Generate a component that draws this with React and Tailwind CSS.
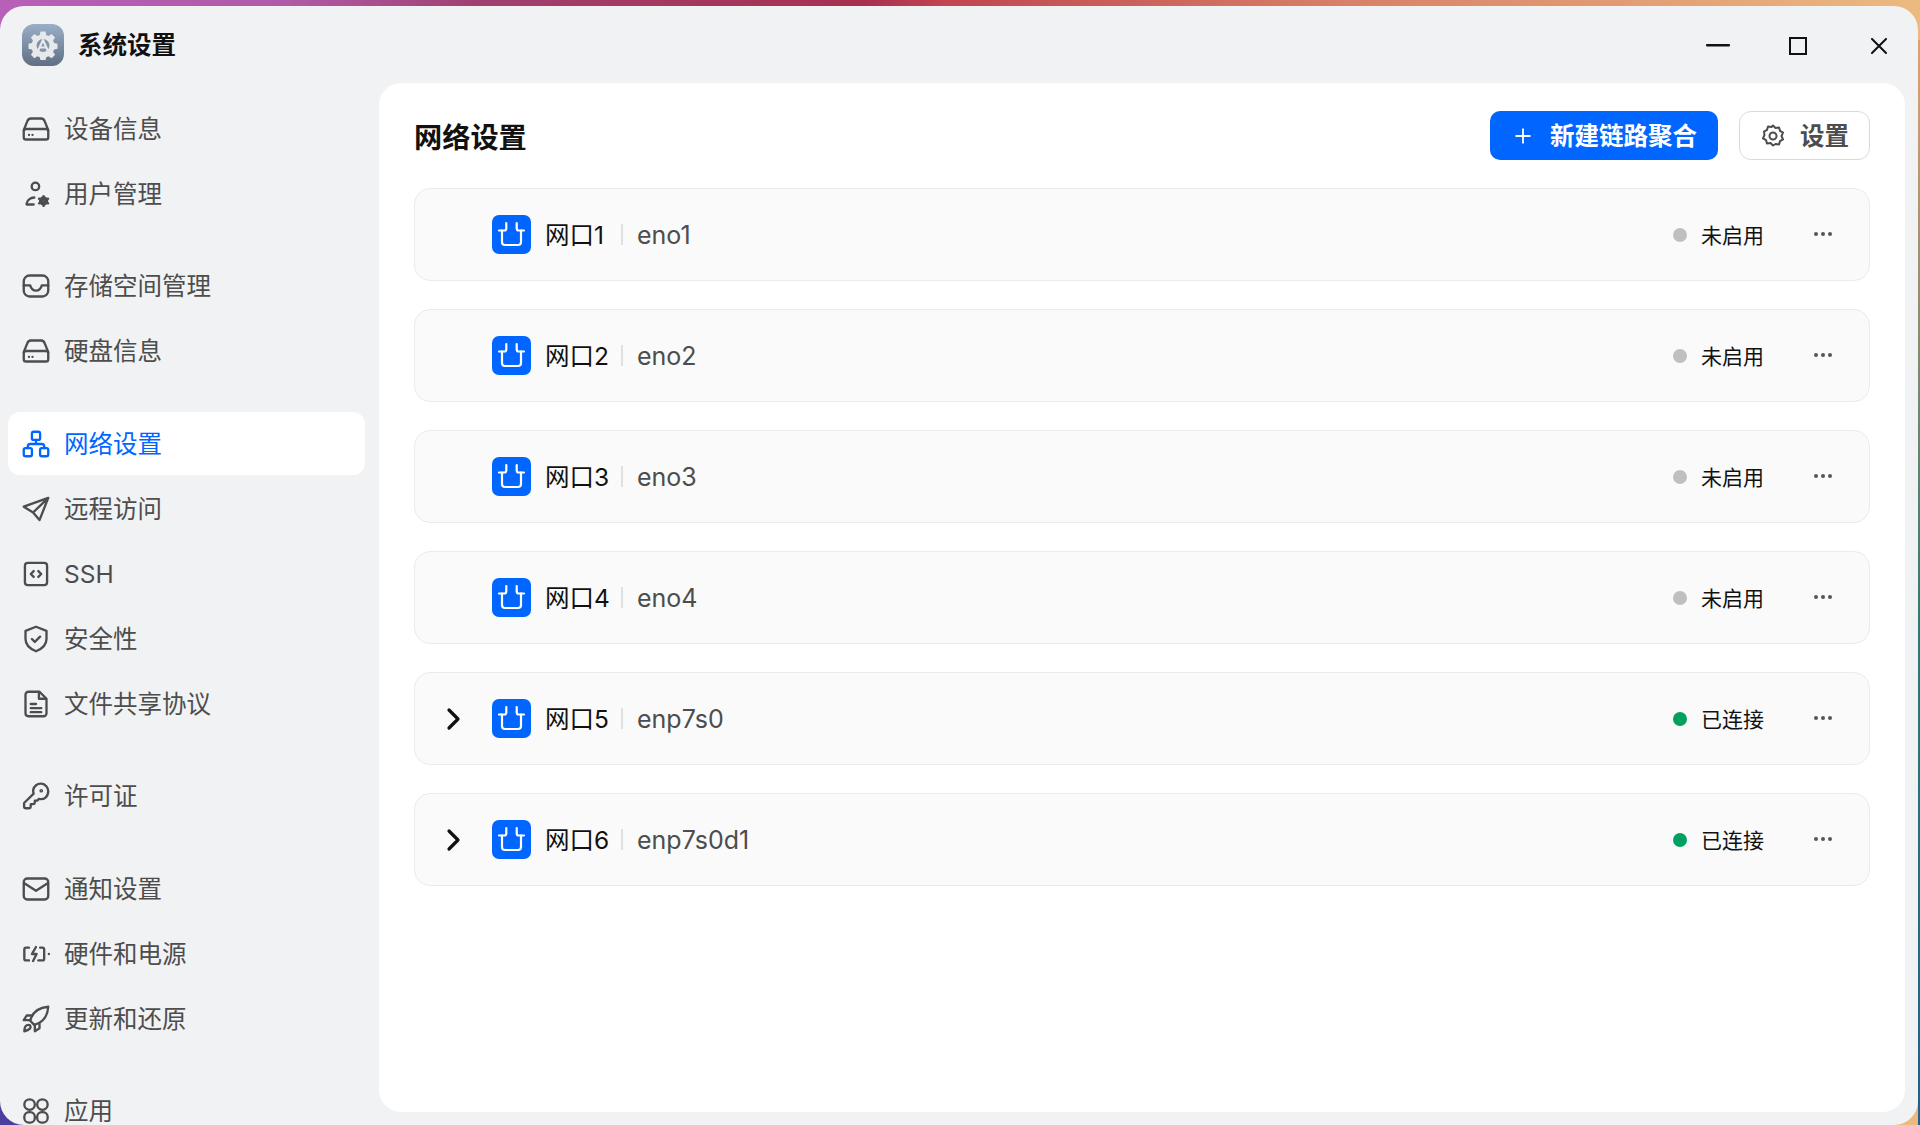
import React from "react";

const cjk = "font-['Inter','Noto_Sans_CJK_SC',sans-serif]";

const Ic = ({ children, className = "", size = 28, vb = 24, sw = 2 }) => (
  <svg width={size} height={size} viewBox={`0 0 ${vb} ${vb}`} fill="none" stroke="currentColor" strokeWidth={sw} strokeLinecap="round" strokeLinejoin="round" className={className}>
    {children}
  </svg>
);

const icons = {
  disk: (
    <>
      <path d="M1.5 13 L4.500 5.500 A3.500 3.500 0 0 1 7.700 3 H16.300 A3.500 3.500 0 0 1 19.500 5.500 L22.500 13" />
      <rect x="1.5" y="12" width="21" height="9" rx="2" />
      <path d="M6 17h.01M9 17h.01" />
    </>
  ),
  user: (
    <>
      <circle cx="11.500" cy="5.500" r="3.200" />
      <path d="M4 20 C4.500 17 7.500 15.200 10.500 15" />
      <path d="M4 21 H10" />
      <circle cx="18.500" cy="18" r="1.300" />
      <circle cx="18.500" cy="18" r="3" />
      <path d="M18.500 13.800v1.200M18.500 21v1.200M14.600 16l1.200.6M21.200 19.400l1.200.6M14.600 20l1.200-.6M21.200 16.600l1.200-.6" />
    </>
  ),
  inbox: (
    <>
      <rect x="1.5" y="3" width="21" height="18" rx="5" />
      <path d="M1.5 11.5 H7 C8 15 10 16 12 16 C14 16 16 15 17 11.5 H22.5" />
    </>
  ),
  net: (
    <>
      <rect x="8.5" y="1.5" width="7" height="7" rx="1.5" />
      <rect x="1.5" y="15.5" width="7" height="7" rx="1.5" />
      <rect x="15.5" y="15.5" width="7" height="7" rx="1.5" />
      <path d="M12 8.5V12M5 15.5V14a2 2 0 0 1 2-2h10a2 2 0 0 1 2 2v1.5" />
    </>
  ),
  send: <path d="M22.5 1.5 L1.5 9 L9.5 14 L15 20.5 Z M22.5 1.5 L9.5 14" transform="translate(0 1)" />,
  ssh: (
    <>
      <rect x="2.5" y="2.5" width="19" height="19" rx="2.5" />
      <path d="M10 9.5 L7.5 12 L10 14.5M14 9.5 L16.5 12 L14 14.5" />
    </>
  ),
  shield: (
    <>
      <path d="M12 1.5 L21 5 V12 C21 17 17 20.5 12 22.5 C7 20.5 3 17 3 12 V5 Z" />
      <path d="M8.5 12 L11 14.5 L15.5 10" />
    </>
  ),
  file: (
    <>
      <path d="M5.5 1.5 H15 L21 7.5 V20 A2.5 2.5 0 0 1 18.5 22.5 H5.5 A2.5 2.5 0 0 1 3 20 V4 A2.5 2.5 0 0 1 5.5 1.5 Z" />
      <path d="M14.5 2 V7.5 H20.5M7.5 12H12M7.5 15.5H16.5M7.5 19H16.5" />
    </>
  ),
  key: (
    <>
      <path d="M22.5 8 A6.5 6.5 0 0 0 9.6 6.8 C9.4 8.5 10 10 10 10 L1.8 18 V21 A1.5 1.5 0 0 0 3.3 22.5 H5.8 C7 22.5 7.5 21.5 7.5 20.5 V19 H9.5 C10.5 19 11 18 11 17 V16 H13 L14.5 14.5 C19 15.5 22.5 12.5 22.5 8 Z" />
      <circle cx="16.5" cy="7.5" r=".6" />
    </>
  ),
  mail: (
    <>
      <rect x="1.5" y="3" width="21" height="18" rx="3" />
      <path d="M2 7 L12 13.5 L22 7" />
    </>
  ),
  power: (
    <>
      <path d="M6 6.5H3.5A1.5 1.5 0 0 0 2 8v8a1.5 1.5 0 0 0 1.5 1.5H6" />
      <path d="M15.5 6.5H17.5A1.5 1.5 0 0 1 19 8v8a1.5 1.5 0 0 1-1.5 1.5H14" />
      <path d="M12 6 L8.5 12 H12.5 L9.5 18" />
      <path d="M23 12h.01" />
    </>
  ),
  rocket: (
    <>
      <path d="M22.5 1.5 C15 2 9 6 7 13.5 L10.5 17 C18 15 22 9 22.5 1.5 Z" />
      <path d="M8 9 H4 L1.5 13 H7M15 16 V20 L11 22.5 V17" />
      <path d="M2 22.5 C2 19 3 17 5.5 17 C7.5 17 8 19 6.5 20.5 C5.5 21.5 4 22 2 22.5 Z" />
    </>
  ),
  apps: (
    <>
      <circle cx="6.5" cy="6.5" r="4.5" />
      <circle cx="17.5" cy="6.5" r="4.5" />
      <rect x="2" y="13" width="9" height="9" rx="4" />
      <rect x="13" y="13" width="9" height="9" rx="4" />
    </>
  ),
};

const Item = ({ icon, label, active, last }) => (
  <div className={`h-[63px] mx-[8px] w-[357px] rounded-[12px] flex items-center pl-[14px] ${last ? "mb-[29.5px]" : "mb-[2px]"} ${active ? "bg-white text-[#0066ff]" : "text-[#4d4d4d]"}`}>
    <Ic size={28} sw={2}>{icons[icon]}</Ic>
    <span className="ml-[14px] text-[24.5px] leading-[24px]">{label}</span>
  </div>
);

const Port = () => (
  <div className="w-[39px] h-[39px] rounded-[7px] bg-[#0066ff] shrink-0">
    <svg width="39" height="39" viewBox="0 0 39 39" fill="none" stroke="#fff" strokeWidth="2.2" strokeLinecap="round" strokeLinejoin="round">
      <path d="M7 15.500 H12.500 Q14 15.500 14.300 13.500 V8" />
      <path d="M32 15.500 H26.500 Q25 15.500 24.700 13.500 V8" />
      <path d="M10 15.500 V27 A3 3 0 0 0 13 30 H26 A3 3 0 0 0 29 27 V15.500" />
    </svg>
  </div>
);

const rows = [
  ["网口1", "eno1", false],
  ["网口2", "eno2", false],
  ["网口3", "eno3", false],
  ["网口4", "eno4", false],
  ["网口5", "enp7s0", true],
  ["网口6", "enp7s0d1", true],
];

const Row = ({ name, dev, on }) => (
  <div className="h-[93px] rounded-[16px] border border-[#ebebeb] bg-[#fafafa] flex items-center pr-[37px]">
    <div className="w-[77px] flex justify-end pr-[29px] shrink-0">
      {on && (
        <svg width="22" height="26" viewBox="0 0 22 26" fill="none" stroke="#111" strokeWidth="3.2" strokeLinecap="round" strokeLinejoin="round" className="mr-[-2px]">
          <path d="M6 4 L15 13 L6 22" />
        </svg>
      )}
    </div>
    <Port />
    <span className="ml-[14px] mt-[2px] text-[24.5px] leading-none text-[#111] w-[62px] whitespace-nowrap">{name}</span>
    <span className="ml-[14px] w-[2px] h-[21px] bg-[#e0e0e0]" />
    <span className="ml-[14px] mt-[2px] text-[25px] leading-none text-[#4d4d4d]">{dev}</span>
    <span className={`ml-auto w-[14px] h-[14px] rounded-full ${on ? "bg-[#00a060]" : "bg-[#bfbfbf]"}`} />
    <span className="ml-[14px] mt-[2px] text-[21px] leading-none text-[#111]">{on ? "已连接" : "未启用"}</span>
    <span className="ml-[50px] mb-[2px] flex gap-[3px]">
      <i className="w-[4px] h-[4px] rounded-full bg-[#555]" />
      <i className="w-[4px] h-[4px] rounded-full bg-[#555]" />
      <i className="w-[4px] h-[4px] rounded-full bg-[#555]" />
    </span>
  </div>
);

export default function App() {
  return (
    <div className={`w-[1920px] h-[1125px] overflow-hidden pt-[6px] bg-[linear-gradient(90deg,#b85fb8_0%,#b05aa8_15%,#a04070_25%,#a83050_45%,#c04550_49%,#d88068_70%,#ecba80_100%)] relative ${cjk}`}>
      <div className="absolute right-0 top-[40px] bottom-0 w-[2px] bg-[linear-gradient(180deg,#e0a070,#2a7a70_55%,#1f5f90)]" />
      <div className="absolute left-0 bottom-0 w-[40px] h-[40px] bg-[#4a3fa0]" />
      <div className="relative w-[1918px] h-[1119px] rounded-[24px] bg-[#f1f2f4] overflow-hidden flex flex-col">
        <div className="h-[77px] flex items-center shrink-0 pl-[22px] pr-[31px]">
          <div className="w-[42px] h-[42px] rounded-[12px] bg-[linear-gradient(180deg,#9aaec6,#5f6f84)] flex items-center justify-center">
            <svg width="30" height="30" viewBox="0 0 30 30">
              <path fill="#e6e8ec" d="M12.5 1.5h5l.7 3.6 2.4 1 3-2 3.5 3.5-2 3 1 2.4 3.4.7v5l-3.4.7-1 2.4 2 3-3.5 3.5-3-2-2.4 1-.7 3.1h-5l-.7-3.1-2.4-1-3 2-3.5-3.500 2-3-1-2.400-3.400-.700v-5l3.400-.700 1-2.400-2-3 3.500-3.500 3 2 2.400-1z" />
              <circle cx="15" cy="15.500" r="6.500" fill="#8494a8" />
              <path fill="none" stroke="#e6e8ec" strokeWidth="2.200" strokeLinecap="round" d="M15 10 L10.500 20 M15 10 L19.500 20 M12 17.500 H18" />
            </svg>
          </div>
          <span className="ml-[14px] mt-[2px] text-[24.5px] font-bold text-[#111] leading-none">系统设置</span>
          <div className="ml-auto mt-[2px] flex items-center text-[#111]">
            <svg width="24" height="3" className="mr-[59px]"><rect width="24" height="2.500" fill="currentColor" rx="1" /></svg>
            <svg width="18" height="18" className="mr-[64px]"><rect x="1" y="1" width="16" height="16" fill="none" stroke="currentColor" strokeWidth="2" /></svg>
            <svg width="16" height="16"><path d="M1 1 L15 15 M15 1 L1 15" stroke="currentColor" strokeWidth="2" strokeLinecap="round" /></svg>
          </div>
        </div>
        <div className="flex flex-1 min-h-0">
          <div className="w-[379px] shrink-0 pt-[14px]">
            <Item icon="disk" label="设备信息" />
            <Item icon="user" label="用户管理" last />
            <Item icon="inbox" label="存储空间管理" />
            <Item icon="disk" label="硬盘信息" last />
            <Item icon="net" label="网络设置" active />
            <Item icon="send" label="远程访问" />
            <Item icon="ssh" label="SSH" />
            <Item icon="shield" label="安全性" />
            <Item icon="file" label="文件共享协议" last />
            <Item icon="key" label="许可证" last />
            <Item icon="mail" label="通知设置" />
            <Item icon="power" label="硬件和电源" />
            <Item icon="rocket" label="更新和还原" last />
            <Item icon="apps" label="应用" />
          </div>
          <div className="w-[1526px] h-[1029px] rounded-[22px] bg-white px-[35px] pt-[28px]">
            <div className="h-[49px] flex items-center mb-[28px]">
              <span className="text-[28.200px] mt-[6px] font-bold text-[#111] leading-none">网络设置</span>
              <div className="ml-auto w-[228px] h-[49px] rounded-[10px] bg-[#0066ff] text-white flex items-center pl-[25px]">
                <svg width="16" height="16"><path d="M8 0.500V15.500M0.500 8H15.500" stroke="#fff" strokeWidth="1.800" /></svg>
                <span className="ml-[19px] mt-[2px] text-[24.500px] font-bold leading-none whitespace-nowrap">新建链路聚合</span>
              </div>
              <div className="ml-[21px] w-[131px] h-[49px] rounded-[12px] border border-[#d9d9d9] bg-white flex items-center pl-[21px] text-[#4d4d4d]">
                <Ic size={24} sw={2}>
                  <path d="M12 2l2.500 2.500 3.500-.5 1 3.400 3 1.800-1.500 3.300 1.500 3.300-3 1.800-1 3.400-3.500-.5L12 22l-2.500-2.500-3.500.5-1-3.400-3-1.800 1.500-3.300L3 8.200l3-1.800 1-3.400 3.500.5z" transform="translate(0 -.5)" />
                  <circle cx="12" cy="12" r="3.500" />
                </Ic>
                <span className="ml-[15px] mt-[2px] text-[24.500px] font-bold leading-none">设置</span>
              </div>
            </div>
            <div className="flex flex-col gap-[28px]">
              {rows.map(([n, d, o]) => (
                <Row key={n} name={n} dev={d} on={o} />
              ))}
            </div>
          </div>
        </div>
      </div>
    </div>
  );
}
